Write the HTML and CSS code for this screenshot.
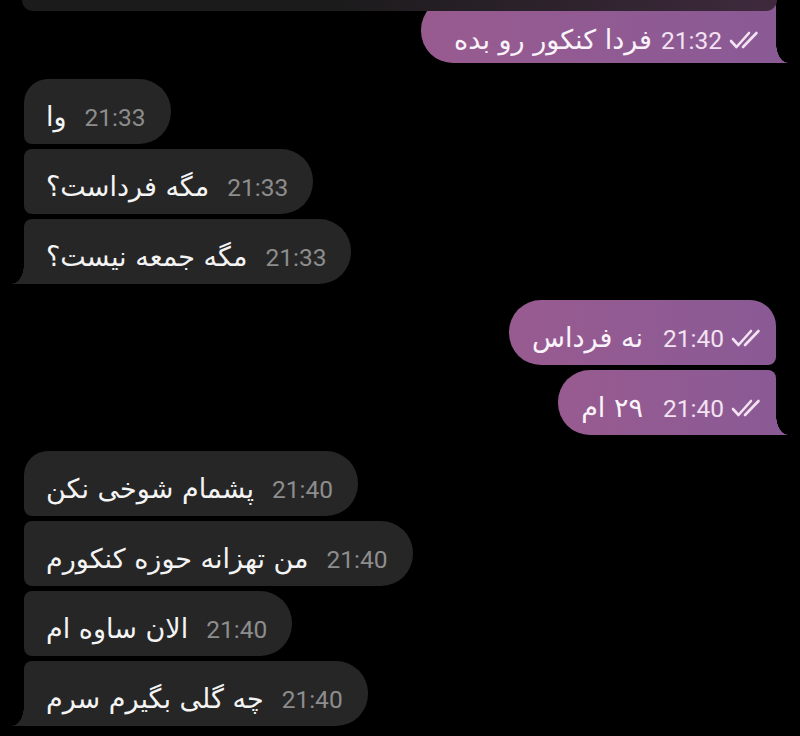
FILE: index.html
```html
<!DOCTYPE html>
<html lang="fa">
  <head>
    <meta charset="UTF-8" />
    <meta name="viewport" content="width=device-width, initial-scale=1.0" />
    <title>گفتگو</title>
    <link rel="stylesheet" href="styles.css">
  </head>
  <body>
    <!-- انتهای پیام بالایی که بیرون از صفحه است -->
    <div class="prev-bubble"></div>

    <main class="chat">
      <div class="group out">
        <div class="bubble out first-out tail">
          <span class="text" dir="rtl">فردا کنکور رو بده</span>
          <span class="time">21:32</span>
          <svg class="ticks" viewBox="0 0 32 18"><path d="M2 10 L7.5 16 L20 2 M14 16 L27.5 2" /></svg>
        </div>
      </div>

      <div class="group in">
        <div class="bubble in top"><span class="text" dir="rtl">وا</span><span class="time">21:33</span></div>
        <div class="bubble in mid"><span class="text" dir="rtl">مگه فرداست؟</span><span class="time">21:33</span></div>
        <div class="bubble in bottom tail"><span class="text" dir="rtl">مگه جمعه نیست؟</span><span class="time">21:33</span></div>
      </div>

      <div class="group out">
        <div class="bubble out top">
          <span class="text" dir="rtl">نه فرداس</span>
          <span class="time">21:40</span>
          <svg class="ticks" viewBox="0 0 32 18"><path d="M2 10 L7.5 16 L20 2 M14 16 L27.5 2" /></svg>
        </div>
        <div class="bubble out bottom tail">
          <span class="text" dir="rtl">۲۹ ام</span>
          <span class="time">21:40</span>
          <svg class="ticks" viewBox="0 0 32 18"><path d="M2 10 L7.5 16 L20 2 M14 16 L27.5 2" /></svg>
        </div>
      </div>

      <div class="group in">
        <div class="bubble in top"><span class="text" dir="rtl">پشمام شوخی نکن</span><span class="time">21:40</span></div>
        <div class="bubble in mid"><span class="text" dir="rtl">من تهزانه حوزه کنکورم</span><span class="time">21:40</span></div>
        <div class="bubble in mid"><span class="text" dir="rtl">الان ساوه ام</span><span class="time">21:40</span></div>
        <div class="bubble in bottom tail"><span class="text" dir="rtl">چه گلی بگیرم سرم</span><span class="time">21:40</span></div>
      </div>
    </main>
  </body>
</html>
```

FILE: styles.css
```css
body {
  margin: 0;
  background-color: #000;
  font-family: "DejaVu Sans", sans-serif;
  overflow: hidden;
}

.prev-bubble {
  position: absolute;
  top: 0;
  left: 22px;
  width: 755px;
  height: 11px;
  border-radius: 0 0 18px 18px;
  background: linear-gradient(90deg, #1b1b1b 0%, #1c1b1c 42%, #3f2a3d 100%);
  z-index: 2;
}

.chat {
  display: flex;
  flex-direction: column;
  gap: 16px;
  padding: 0 24px;
  margin-top: -2px;
}

.group {
  display: flex;
  flex-direction: column;
  gap: 5px;
}

.group.in {
  align-items: flex-start;
}

.group.out {
  align-items: flex-end;
}

.bubble {
  position: relative;
  display: flex;
  align-items: baseline;
  box-sizing: border-box;
  height: 65px;
  padding: 20px 25px 0 22px;
  line-height: 36px;
}

.bubble .text {
  font-size: 27px;
  color: #f4f4f4;
}

.bubble .time {
  font-family: Roboto, "Liberation Sans", sans-serif;
  font-size: 24.5px;
  margin-left: 18px;
}

/* دریافتی */
.bubble.in {
  background-color: #262626;
  border-radius: 8px 32px 32px 8px;
}

.bubble.in .time {
  color: #8d8d8d;
}

.bubble.in.top {
  border-top-left-radius: 24px;
}

.bubble.in.bottom {
  border-bottom-left-radius: 0;
}

.bubble.in.tail::after {
  content: "";
  position: absolute;
  left: -12px;
  bottom: 0;
  width: 12px;
  height: 20px;
  background: radial-gradient(ellipse 12px 20px at 0 0, transparent 97%, #262626 100%);
}

/* ارسالی */
.bubble.out {
  background: linear-gradient(90deg, #985b90, #8a5a95);
  border-radius: 32px 8px 8px 32px;
  padding: 20px 13px 0 23px;
}

.bubble.out .text {
  color: #fbf3fa;
}

.bubble.out .time {
  color: #f3e2f1;
  margin-left: 20px;
}

.bubble.out.top {
  border-top-right-radius: 26px;
}

.bubble.out.bottom,
.bubble.out.first-out {
  border-bottom-right-radius: 0;
}

.bubble.out.first-out {
  border-top-right-radius: 8px;
  padding: 24px 15px 0 33px;
}

.bubble.out.first-out .time {
  margin-left: 9px;
}

.bubble.out.tail::after {
  content: "";
  position: absolute;
  right: -12px;
  bottom: 0;
  width: 12px;
  height: 20px;
  background: radial-gradient(ellipse 12px 20px at 100% 0, transparent 97%, #8a5a95 100%);
}

.ticks {
  width: 32px;
  height: 18px;
  margin-left: 7px;
  fill: none;
  stroke: #f3e2f1;
  stroke-width: 2.6;
  stroke-linecap: round;
  stroke-linejoin: round;
}
```
